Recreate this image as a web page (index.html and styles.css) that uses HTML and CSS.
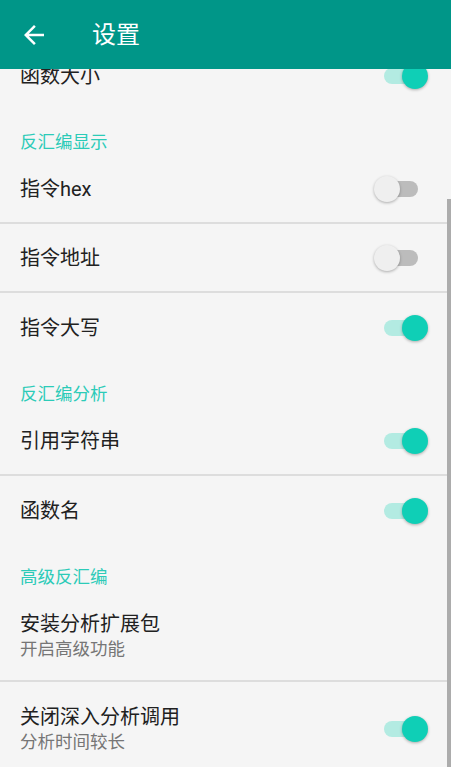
FILE: index.html
```html
<!DOCTYPE html>
<html>
<head>
    <meta charset="utf-8">
    <link rel="stylesheet" href="styles.css">
</head>
<body>
    <div class="app">
        <div class="toolbar">
            <svg class="back" viewBox="0 0 24 24" width="30" height="30">
                <path d="M20 11H7.83l5.59-5.59L12 4l-8 8 8 8 1.41-1.41L7.83 13H20v-2z" fill="#fff"/>
            </svg>
            <div class="title">设置</div>
        </div>

        <div class="content">
            <div class="list">
                <div class="section">
                    <div class="row">
                        <div class="text"><div class="label">函数大小</div></div>
                        <div class="switch on"><span class="knob"></span></div>
                    </div>
                </div>

                <div class="category">反汇编显示</div>
                <div class="section">
                    <div class="row">
                        <div class="text"><div class="label">指令hex</div></div>
                        <div class="switch"><span class="knob"></span></div>
                    </div>
                    <div class="row">
                        <div class="text"><div class="label">指令地址</div></div>
                        <div class="switch"><span class="knob"></span></div>
                    </div>
                    <div class="row">
                        <div class="text"><div class="label">指令大写</div></div>
                        <div class="switch on"><span class="knob"></span></div>
                    </div>
                </div>

                <div class="category">反汇编分析</div>
                <div class="section">
                    <div class="row">
                        <div class="text"><div class="label">引用字符串</div></div>
                        <div class="switch on"><span class="knob"></span></div>
                    </div>
                    <div class="row">
                        <div class="text"><div class="label">函数名</div></div>
                        <div class="switch on"><span class="knob"></span></div>
                    </div>
                </div>

                <div class="category">高级反汇编</div>
                <div class="section">
                    <div class="row tall">
                        <div class="text">
                            <div class="label">安装分析扩展包</div>
                            <div class="summary">开启高级功能</div>
                        </div>
                    </div>
                    <div class="row tall">
                        <div class="text">
                            <div class="label">关闭深入分析调用</div>
                            <div class="summary">分析时间较长</div>
                        </div>
                        <div class="switch on"><span class="knob"></span></div>
                    </div>
                </div>
            </div>
            <div class="scrollbar"></div>
        </div>
    </div>
</body>
</html>
```

FILE: styles.css
```css
* {
    margin: 0;
    padding: 0;
    box-sizing: border-box;
}

body {
    font-family: Roboto, "Noto Sans CJK SC", sans-serif;
    background-color: #f5f5f5;
    color: #212121;
    width: 451px;
    height: 767px;
    overflow: hidden;
}

.app {
    display: flex;
    flex-direction: column;
    height: 767px;
}

.toolbar {
    height: 69px;
    flex-shrink: 0;
    background-color: #009688;
    display: flex;
    align-items: center;
    padding-left: 19px;
    position: relative;
    z-index: 2;
}

.back {
    display: block;
    margin-top: 1px;
}

.title {
    color: #fff;
    font-size: 24px;
    margin-left: 43px;
    line-height: 30px;
}

/* scrolled list, clipped under the toolbar */
.content {
    flex: 1;
    overflow: hidden;
    position: relative;
}

.list {
    margin-top: -28px;
}

.row {
    height: 69px;
    display: flex;
    align-items: center;
    justify-content: space-between;
    padding: 0 33px 0 20px;
}

.row.tall {
    height: 92px;
    padding-top: 2px;
}

.section .row:not(:last-child) {
    border-bottom: 2px solid #dddddd;
}

.label {
    font-size: 20px;
    line-height: 26px;
    color: #212121;
}

.summary {
    font-size: 17.5px;
    line-height: 24px;
    color: #767676;
}

.category {
    height: 45px;
    padding: 21px 20px 0;
    font-size: 17.5px;
    line-height: 22px;
    color: #2ccbb8;
}

.switch {
    position: relative;
    width: 34px;
    height: 16px;
    border-radius: 8px;
    background-color: #bcbcbc;
    flex-shrink: 0;
}

.switch.on {
    background-color: #b3ebe2;
}

.knob {
    position: absolute;
    top: -5px;
    left: -10px;
    width: 26px;
    height: 26px;
    border-radius: 50%;
    background-color: #efefef;
    box-shadow: 0 1px 3px rgba(0, 0, 0, 0.3);
}

.switch.on .knob {
    left: 18px;
    background-color: #0fcfb6;
}

.scrollbar {
    position: absolute;
    right: 0;
    top: 130px;
    bottom: 0;
    width: 4px;
    background-color: #acacac;
}
```
